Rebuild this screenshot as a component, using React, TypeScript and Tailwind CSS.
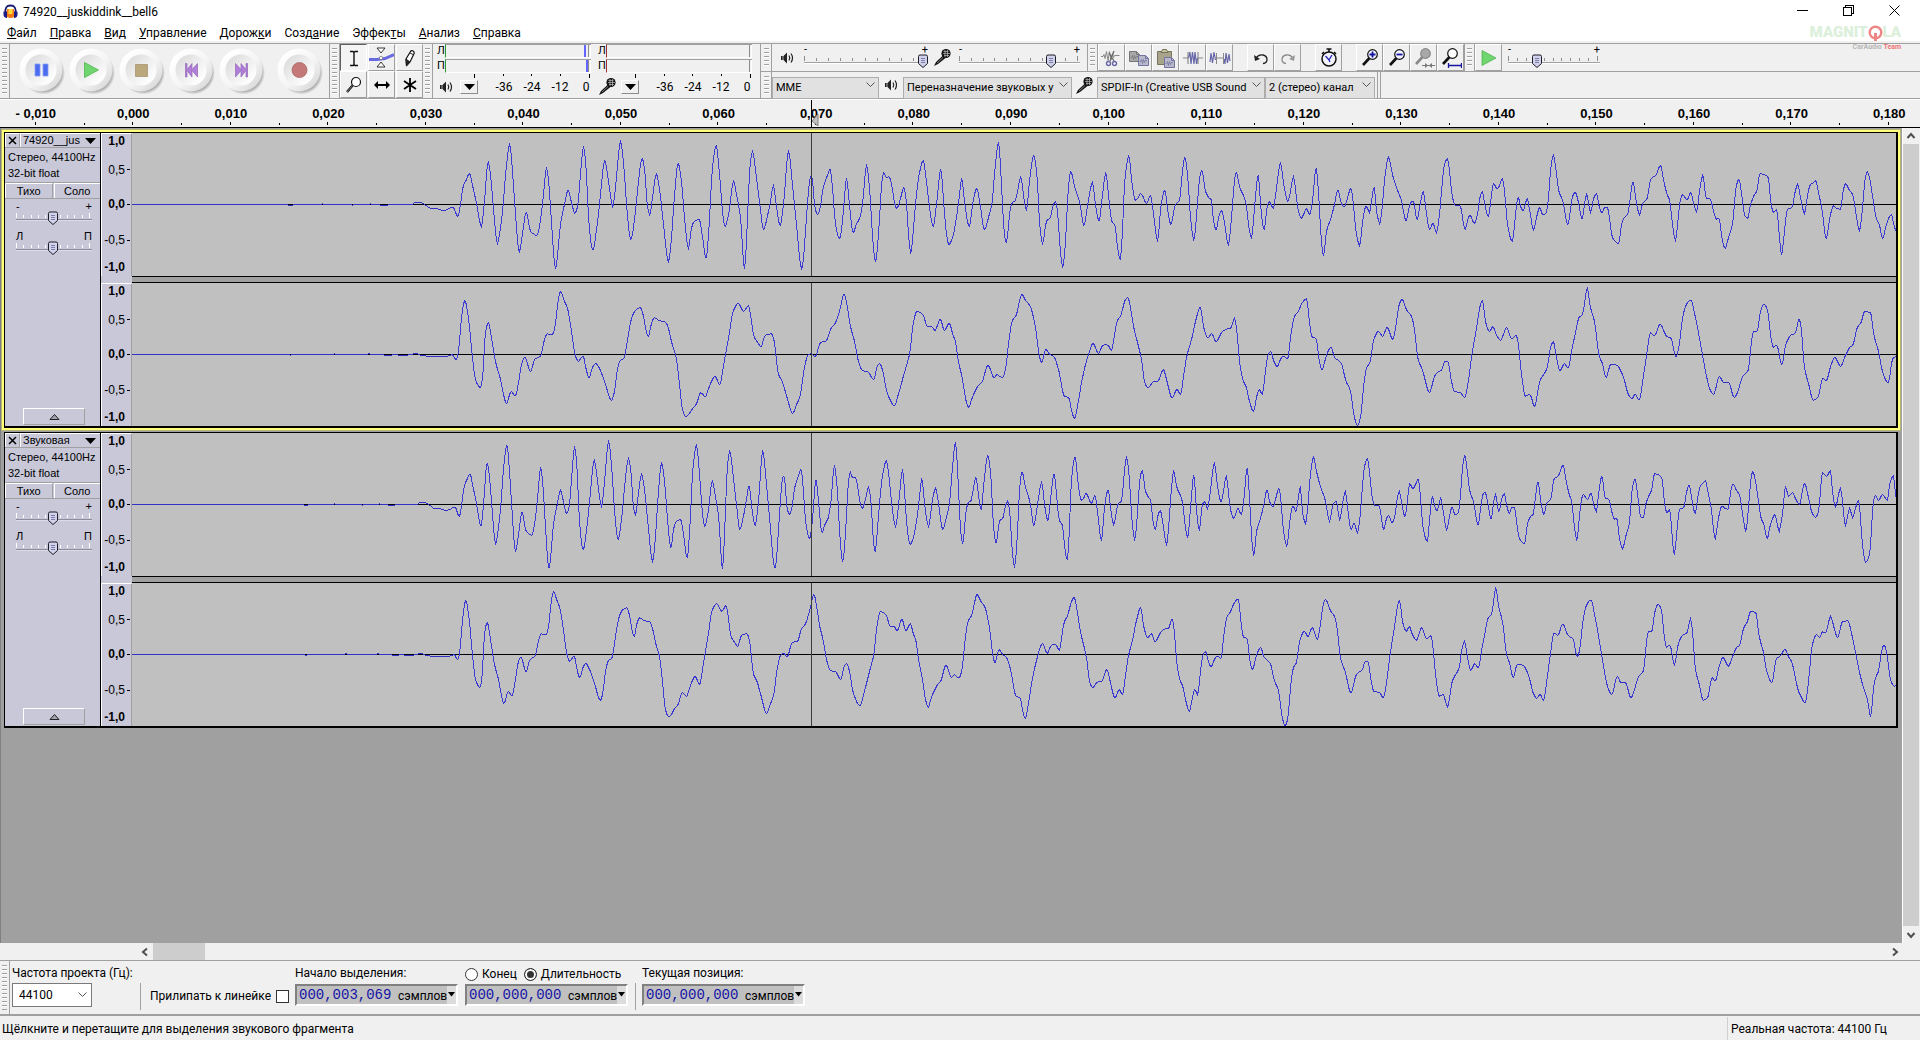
import React from "react";

/* ------------------------------------------------------------------ */
/* Waveform data: time and level pairs, three units to a screen pixel  */
/* ------------------------------------------------------------------ */

const LEFT: number[] = [
  -925, 0, -460, 0, -455, -2, -445, -2, -440, 0, -360, 0, -355, 2, -350, 0, -270, 0, -265, -2, -260, 0, -212, 0, -210, 2, -205, 0, -160, -2, -150, 0,
  -85, 0, -75, 6, -62, 6, -50, 1, -40, -5, -27, -13, -15, -12, 8, -18, 22, -14, 38, -8, 52, -37, 60, 0, 68, 55, 76, 72, 87, 92, 97, 52, 108, 5,
  123, -66, 131, 0, 143, 126, 150, 90, 157, 10, 171, -117, 180, -70, 188, 0, 196, 100, 208, 180, 216, 100, 223, 0, 236, -141, 247, -80, 257, -22,
  270, -80, 280, -88, 289, -93, 298, -60, 308, 20, 318, 111, 326, 50, 332, -40, 345, -192, 360, -60, 372, 0, 383, 43, 392, 10, 403, -27, 412, 0,
  420, 90, 429, 175, 438, 90, 444, -40, 457, -137, 470, -60, 478, 10, 493, 132, 504, 70, 517, -7, 525, 50, 540, 188, 552, 90, 558, 0, 571, -105,
  584, -30, 592, 50, 605, 139, 614, 90, 620, 0, 628, -30, 636, 20, 648, 91, 658, 40, 668, -50, 684, -171, 693, -100, 700, 0, 713, 124, 724, 60,
  732, -40, 744, -132, 752, -75, 760, -52, 767, -48, 776, -45, 785, -90, 797, -162, 806, -60, 815, 100, 827, 177, 838, 80, 846, -20, 854, -66,
  866, -20, 879, 70, 890, 20, 900, -40, 912, -192, 922, -20, 928, 110, 936, 159, 948, 80, 958, 0, 969, -75, 982, -30, 990, 10, 999, 57, 1007, 0,
  1019, -63, 1030, 10, 1044, 160, 1056, 60, 1066, -40, 1084, -192, 1098, -40, 1104, 40, 1110, 85, 1115, 80, 1122, 0, 1131, -30, 1140, -5, 1148, 50,
  1160, 85, 1169, 107, 1176, 50, 1184, -50, 1197, -103, 1205, -60, 1211, 10, 1218, 78, 1226, 10, 1238, -86, 1247, -60, 1258, -40, 1267, 10,
  1278, 117, 1288, 40, 1295, -80, 1305, -171, 1318, -30, 1323, 60, 1330, 96, 1338, 80, 1346, 83, 1355, 50, 1362, 5, 1369, -12, 1378, 10, 1390, 51,
  1398, 5, 1404, -90, 1411, -145, 1420, -60, 1427, 20, 1436, 90, 1448, 132, 1458, 70, 1466, 0, 1478, -66, 1488, 0, 1501, 105, 1510, 0, 1517, -80,
  1525, -120, 1537, -97, 1548, -40, 1556, 20, 1564, 78, 1573, 0, 1586, -66, 1598, 10, 1609, 49, 1619, 0, 1632, -75, 1645, -35, 1654, 0, 1663, 100,
  1674, 187, 1683, 60, 1690, -70, 1697, -117, 1710, -10, 1716, 6, 1724, 10, 1732, 45, 1741, 82, 1750, 20, 1758, -18, 1766, 60, 1780, 148, 1790, 80,
  1797, -50, 1806, -117, 1818, -50, 1830, -38, 1837, -5, 1845, 8, 1852, -30, 1858, -120, 1867, -188, 1875, -110, 1883, 40, 1891, 99, 1903, 50,
  1918, 5, 1930, -63, 1942, 0, 1956, 66, 1965, 0, 1976, -50, 1985, 20, 1996, 93, 2005, 20, 2013, -47, 2024, -65, 2030, -120, 2039, -167, 2046, -80,
  2052, 60, 2065, 144, 2075, 60, 2085, 13, 2092, 18, 2100, 33, 2108, 22, 2118, 3, 2130, 27, 2138, -20, 2151, -108, 2162, 0, 2173, 44, 2182, -20,
  2191, -60, 2205, 0, 2217, 12, 2225, 90, 2233, 142, 2242, 80, 2250, -40, 2260, -105, 2270, -10, 2276, 70, 2284, 103, 2295, 40, 2304, 22, 2312, 15,
  2318, -40, 2327, -77, 2335, -35, 2343, -18, 2351, -50, 2364, -120, 2373, -40, 2379, 40, 2387, 98, 2398, 50, 2408, 30, 2417, 0, 2424, -60,
  2433, -99, 2443, 0, 2453, 89, 2462, -20, 2471, -77, 2480, -5, 2487, 8, 2498, -12, 2507, 40, 2520, 124, 2530, 60, 2542, 8, 2550, 40, 2559, 85,
  2568, 20, 2575, -25, 2583, -41, 2590, -28, 2597, -12, 2608, -30, 2616, 10, 2627, 111, 2635, 20, 2642, -100, 2649, -153, 2658, -80, 2670, -45,
  2681, -5, 2692, 44, 2702, 5, 2712, -7, 2720, 15, 2731, 50, 2739, 0, 2745, -70, 2757, -123, 2768, -40, 2777, -4, 2787, -23, 2793, 10, 2801, 53,
  2808, -20, 2818, -57, 2826, 0, 2833, 80, 2844, 142, 2856, 90, 2868, 50, 2882, 15, 2897, -50, 2908, 0, 2918, 11, 2930, -45, 2939, 0, 2948, 39,
  2957, -20, 2967, -75, 2977, -56, 2988, -84, 2996, -40, 3003, 40, 3011, 115, 3021, 138, 3028, 90, 3036, 20, 3045, -3, 3058, -2, 3074, -75,
  3083, -40, 3089, -32, 3101, -56, 3111, -30, 3118, 20, 3125, 39, 3133, 0, 3143, -36, 3151, 10, 3158, 63, 3170, 48, 3178, 60, 3186, 78, 3194, 20,
  3201, -60, 3216, -111, 3224, -40, 3233, 23, 3240, -5, 3248, -20, 3260, 18, 3268, -20, 3279, -75, 3290, -30, 3297, -8, 3307, -31, 3317, -25,
  3324, 20, 3331, 110, 3339, 148, 3347, 100, 3355, 40, 3367, 10, 3382, -62, 3392, 0, 3398, 30, 3405, 36, 3414, 5, 3425, -45, 3432, 0, 3439, 30,
  3450, -23, 3460, 20, 3468, 33, 3475, 0, 3484, -26, 3492, -10, 3501, -10, 3508, -50, 3516, -100, 3535, -117, 3543, -60, 3552, -38, 3562, -30,
  3568, 10, 3578, 69, 3587, 10, 3597, -30, 3607, 5, 3620, 17, 3630, 75, 3646, 88, 3660, 118, 3670, 70, 3680, 30, 3688, 10, 3696, -60, 3705, -107,
  3715, -20, 3720, 15, 3726, 29, 3740, 15, 3751, 35, 3760, 0, 3769, -20, 3777, 40, 3787, 87, 3797, 20, 3810, 15, 3820, -25, 3828, -44, 3836, -42,
  3844, -100, 3854, -132, 3865, -95, 3877, -55, 3885, 40, 3895, 77, 3905, 20, 3913, -35, 3922, -41, 3930, 0, 3940, 25, 3950, 45, 3958, 92,
  3970, 90, 3983, 80, 3992, 0, 3999, -24, 4009, -15, 4016, -90, 4023, -150, 4032, -80, 4040, -15, 4055, -8, 4064, 40, 4072, 60, 4080, 20,
  4092, -27, 4100, 20, 4109, 58, 4116, 64, 4125, 71, 4135, 30, 4144, -10, 4157, -102, 4168, -40, 4179, -4, 4190, -12, 4200, -14, 4208, 40,
  4215, 62, 4227, 42, 4237, 28, 4247, -30, 4257, -78, 4267, 0, 4273, 70, 4280, 99, 4287, 80, 4297, 20, 4307, -40, 4317, -62, 4327, -104,
  4337, -62, 4353, -30, 4360, -60, 4367, -80, 4371, -60,
];

const RIGHT: number[] = [
  -925, 0, -455, 0, -450, -2, -442, 0, -325, 0, -318, 2, -310, 0, -222, 0, -215, 2, -205, 0, -180, 1, -160, -3, -140, -1, -105, -3, -90, 0, -75, 3, -55, -3,
  -25, -6, 15, -6, 35, -1, 47, -15, 54, 10, 62, 100, 73, 163, 85, 100, 95, 0, 105, -75, 120, -99, 128, -50, 133, 50, 143, 96, 155, 40, 165, -20,
  180, -75, 198, -147, 212, -111, 224, -125, 235, -80, 243, -30, 253, -8, 270, -51, 283, -15, 300, -5, 312, 45, 320, 62, 335, 59, 343, 80,
  353, 160, 360, 189, 370, 165, 382, 135, 393, 70, 405, -5, 413, -20, 428, -5, 437, -45, 446, -70, 456, -40, 465, -27, 478, -45, 495, -90,
  513, -138, 522, -110, 530, -50, 538, -20, 551, -10, 562, 50, 575, 115, 587, 135, 600, 140, 610, 110, 617, 70, 624, 54, 632, 90, 641, 110,
  655, 102, 675, 97, 683, 80, 695, 30, 706, -5, 715, -70, 725, -160, 735, -186, 745, -180, 757, -160, 767, -150, 781, -115, 795, -126, 805, -100,
  823, -66, 838, -90, 848, -40, 855, 0, 866, 60, 878, 130, 893, 153, 910, 130, 924, 147, 933, 100, 940, 55, 952, 36, 962, 24, 974, 57, 993, 62,
  1001, 40, 1014, -60, 1025, -80, 1037, -120, 1057, -177, 1068, -150, 1080, -120, 1090, -50, 1102, -3, 1112, 3, 1124, -6, 1140, 36, 1157, 40,
  1172, 80, 1182, 90, 1197, 130, 1211, 181, 1220, 145, 1230, 85, 1243, 35, 1255, -25, 1265, -48, 1282, -52, 1300, -75, 1310, -35, 1318, -27,
  1327, -50, 1340, -115, 1362, -153, 1375, -115, 1390, -60, 1407, 0, 1418, 90, 1428, 129, 1447, 120, 1460, 85, 1473, 85, 1483, 72, 1499, 105,
  1512, 72, 1526, 93, 1537, 60, 1545, 40, 1553, -15, 1567, -80, 1578, -145, 1585, -158, 1595, -130, 1612, -95, 1626, -80, 1642, -32, 1650, -45,
  1660, -70, 1670, -60, 1685, -70, 1695, -45, 1705, 40, 1715, 100, 1728, 120, 1738, 165, 1744, 180, 1755, 162, 1770, 143, 1785, 80, 1795, 5,
  1803, -25, 1816, 15, 1828, 0, 1840, -7, 1855, -50, 1872, -125, 1885, -130, 1895, -175, 1902, -192, 1912, -150, 1925, -75, 1943, -3, 1958, 33,
  1974, 4, 1985, 25, 1995, 31, 2003, 27, 2013, 12, 2023, 65, 2030, 100, 2040, 115, 2053, 160, 2062, 171, 2070, 140, 2080, 80, 2095, 20,
  2103, -15, 2113, -85, 2123, -99, 2137, -83, 2152, -80, 2169, -45, 2178, -75, 2195, -130, 2209, -105, 2220, -120, 2230, -60, 2240, 0, 2252, 40,
  2265, 100, 2279, 141, 2290, 80, 2302, 50, 2314, 63, 2326, 39, 2345, 67, 2357, 76, 2370, 78, 2382, 108, 2388, 80, 2397, -20, 2407, -75,
  2418, -100, 2428, -145, 2439, -171, 2448, -130, 2456, -105, 2465, -120, 2475, -50, 2483, 0, 2491, 9, 2500, -20, 2510, -37, 2520, -15, 2528, -5,
  2542, -12, 2550, 50, 2562, 115, 2573, 128, 2585, 155, 2598, 167, 2608, 90, 2615, 52, 2627, 48, 2635, -10, 2644, -46, 2656, -8, 2664, 12,
  2672, 21, 2682, -8, 2702, -25, 2715, -75, 2730, -110, 2742, -190, 2751, -214, 2760, -190, 2770, -90, 2778, -40, 2788, -25, 2800, 45, 2814, 70,
  2826, 54, 2840, 81, 2857, 45, 2866, 85, 2876, 150, 2884, 165, 2900, 130, 2913, 115, 2922, 75, 2932, -10, 2947, -50, 2967, -115, 2982, -65,
  2992, -52, 3002, -48, 3014, -20, 3022, -20, 3032, -75, 3042, -112, 3060, -113, 3072, -130, 3082, -90, 3093, -10, 3105, 60, 3125, 162, 3137, 90,
  3147, 70, 3157, 84, 3167, 60, 3180, 43, 3198, 80, 3213, 47, 3227, 57, 3233, 35, 3242, -50, 3255, -125, 3268, -120, 3282, -156, 3298, -80,
  3320, -40, 3330, 20, 3338, 39, 3348, -10, 3358, -48, 3371, -28, 3383, -40, 3395, 20, 3405, 65, 3415, 110, 3427, 122, 3433, 160, 3440, 198,
  3450, 140, 3463, 95, 3475, 0, 3485, -25, 3497, -70, 3510, -30, 3528, -32, 3548, -65, 3562, -115, 3574, -132, 3584, -120, 3596, -137, 3608, -70,
  3620, 10, 3630, 65, 3642, 57, 3659, 91, 3677, 56, 3692, 48, 3706, -8, 3714, 15, 3725, 100, 3735, 145, 3751, 163, 3765, 110, 3785, 5, 3800, -75,
  3808, -105, 3819, -120, 3837, -65, 3850, -85, 3863, -83, 3882, -130, 3892, -110, 3907, -65, 3923, -48, 3933, 40, 3939, 70, 3950, 70,
  3960, 130, 3971, 151, 3982, 130, 3990, 60, 3998, 22, 4009, 28, 4024, -30, 4036, 30, 4050, 57, 4065, 65, 4076, 107, 4082, 80, 4092, -40,
  4105, -90, 4118, -137, 4133, -128, 4147, -70, 4157, -80, 4169, -40, 4183, -9, 4200, -35, 4215, -3, 4227, 20, 4238, 30, 4250, 80, 4262, 97,
  4272, 129, 4290, 125, 4300, 60, 4315, 5, 4327, -55, 4343, -84, 4357, -12, 4370, -5,
];

/* Continuation of the second clip past the end of the first one, in pixels */
const LEFT_TAIL: number[] = [
  1782, -30, 1785, 53, 1788, 25, 1792, 35, 1795, 18, 1799, 0, 1804, 64, 1808, 20, 1811, -20, 1815, -38, 1818, -20, 1822, 95, 1826, 85, 1830, 102,
  1832, 40, 1835, -6, 1840, 48, 1845, -62, 1849, -12, 1852, -38, 1858, 12, 1862, -120, 1865, -173, 1869, -150, 1873, 10, 1875, 28, 1878, 12,
  1882, 30, 1887, 12, 1889, 60, 1893, 86, 1895, 30, 1898, -8,
];
const RIGHT_TAIL: number[] = [
  1784, 16, 1788, -5, 1792, -30, 1798, -110, 1805, -144, 1808, -80, 1812, 30, 1816, 60, 1819, 50, 1822, 68, 1825, 65, 1830, 113, 1834, 75,
  1837, 50, 1842, 98, 1847, 101, 1852, 50, 1857, -25, 1862, -90, 1867, -135, 1870, -185, 1874, -80, 1878, -50, 1882, 20, 1884, 28, 1887, -10,
  1890, -75, 1894, -96, 1898, -80,
];

type Pt = [number, number];
const WAVE_LEFT = 132;
const ZERO = 71;

function toPoints(data: number[], map: (x: number) => number): Pt[] {
  const out: Pt[] = [];
  for (let i = 0; i < data.length; i += 2) out.push([map(data[i]), data[i + 1] / 3]);
  return out;
}

/* Monotone cubic interpolation, sampled once per pixel column */
function sample(pts: Pt[]): number[] {
  const n = pts.length;
  const d: number[] = [];
  for (let i = 0; i < n - 1; i++) d.push((pts[i + 1][1] - pts[i][1]) / (pts[i + 1][0] - pts[i][0]));
  const m: number[] = [d[0]];
  for (let i = 1; i < n - 1; i++) m.push(d[i - 1] * d[i] <= 0 ? 0 : (2 * d[i - 1] * d[i]) / (d[i - 1] + d[i]));
  m.push(d[n - 2]);
  const ys: number[] = [];
  let k = 0;
  const end = Math.floor(pts[n - 1][0]);
  for (let x = 0; x <= end; x++) {
    while (k < n - 2 && pts[k + 1][0] < x) k++;
    const h = pts[k + 1][0] - pts[k][0];
    const t = Math.max(0, Math.min(1, (x - pts[k][0]) / h));
    const t2 = t * t;
    const t3 = t2 * t;
    ys.push(
      (2 * t3 - 3 * t2 + 1) * pts[k][1] + (t3 - 2 * t2 + t) * h * m[k] + (3 * t2 - 2 * t3) * pts[k + 1][1] + (t3 - t2) * h * m[k + 1],
    );
  }
  return ys;
}

const first = (x: number) => 308 + x / 3;
const second = (x: number) => 506.5 + 0.9178 * (440 + x / 3 - 509.3) - WAVE_LEFT;
const fromPx = (x: number) => x - WAVE_LEFT;

const CHANNELS = {
  a1: sample(toPoints(LEFT, first)),
  a2: sample(toPoints(RIGHT, first)),
  b1: sample([...toPoints(LEFT, second), ...toPoints(LEFT_TAIL, fromPx)]),
  b2: sample([...toPoints(RIGHT, second), ...toPoints(RIGHT_TAIL, fromPx)]),
};

function Wave({ ys }: { ys: number[] }) {
  const rows = ys.map((v) => Math.round(ZERO - v));
  const line = rows.map((y, x) => `${x ? "L" : "M"}${x + 0.5} ${y + 0.5}`).join("");
  const dots = rows.map((y, x) => `M${x} ${y}h1v1h-1z`).join("");
  return (
    <svg className="block h-full w-full" shapeRendering="crispEdges" aria-hidden="true">
      <rect x="0" y={ZERO} width="100%" height="1" fill="#000" />
      <path d={line} fill="none" stroke="#4040d6" strokeWidth="1" />
      <path d={dots} fill="#3232c8" />
      <rect x="679" y="0" width="1" height="100%" fill="#3c3c3c" />
    </svg>
  );
}

/* ------------------------------------------------------------------ */
/* Small shared parts                                                  */
/* ------------------------------------------------------------------ */

function Grip() {
  return (
    <div className="flex w-[10px] shrink-0 justify-center self-stretch border-r border-[#a0a0a0] py-1">
      <div className="w-[5px] bg-[repeating-linear-gradient(to_bottom,#a0a0a0_0px,#a0a0a0_1px,#ffffff_1px,#ffffff_2px,#f0f0f0_2px,#f0f0f0_4px)]" />
    </div>
  );
}

function Cell({ label, pressed, children }: { label: string; pressed?: boolean; children: React.ReactNode }) {
  return (
    <button
      aria-label={label}
      className={
        pressed
          ? "flex h-[27px] w-[27px] shrink-0 items-center justify-center border border-t-[#606060] border-l-[#606060] border-r-white border-b-white bg-[#f4f4f4]"
          : "flex h-[27px] w-[27px] shrink-0 items-center justify-center border border-t-white border-l-white border-r-[#a0a0a0] border-b-[#a0a0a0] bg-[#f0f0f0]"
      }
    >
      {children}
    </button>
  );
}

function Speaker() {
  return (
    <svg width="15" height="14" viewBox="0 0 15 14" className="shrink-0" aria-hidden="true">
      <path d="M1 5h2.500L7 1.500v11L3.500 9H1z" fill="#222" />
      <path d="M3 5v4" stroke="#aaa" />
      <path d="M9 4.500q1.500 2.500 0 5M11 2.500q3 4.500 0 9" fill="none" stroke="#222" strokeWidth="1.200" />
    </svg>
  );
}

function Mic() {
  return (
    <svg width="19" height="19" viewBox="0 0 19 19" className="shrink-0" aria-hidden="true">
      <path d="M1 18l2-4 7-6.500 2.500 2.500L5 16z" fill="#111" />
      <circle cx="13" cy="5.500" r="4.600" fill="#111" />
      <path d="M10.500 3.500h5M10 5.500h7M11 7.500h5M12 2v7M14.500 2v7" stroke="#bbb" strokeWidth="0.700" />
      <path d="M4 15l6-5.500" stroke="#999" strokeWidth="0.800" />
    </svg>
  );
}

function Slider({ label, width, thumb, low, high, tint }: { label: string; width: number; thumb: number; low: string; high: string; tint?: boolean }) {
  const ticks = Array.from({ length: 11 }, (_, i) => Math.round((i * (width - 3)) / 10));
  return (
    <div className="relative h-[27px] shrink-0" style={{ width }}>
      <svg className="block" width={width} height="27" aria-hidden="true">
        <g shapeRendering="crispEdges">
          {ticks.map((x, i) => (
            <rect key={i} x={x} y={i % 10 ? 14 : 12} width="1" height={i % 10 ? 3 : 5} fill={tint ? "#ffffff" : "#8c8c8c"} />
          ))}
          <rect x="0" y="18" width={width} height="1" fill={tint ? "#8c8c9c" : "#a0a0a0"} />
          <rect x="0" y="19" width={width} height="1" fill={tint ? "#dcdce8" : "#ffffff"} />
        </g>
        <path d={`M${thumb - 4.5} 12.500q0-1.500 1.500-1.500h6q1.500 0 1.500 1.500v7l-4.500 4-4.500-4z`} fill="#d2d2ea" stroke="#1c1c28" />
        <path d={`M${thumb - 2} 14.500h4M${thumb - 2} 16.500h4M${thumb - 2} 18.500h4`} stroke="#7c7ca8" />
      </svg>
      <span className="absolute top-0 left-0 text-[11px] leading-[11px]">{low}</span>
      <span className="absolute top-0 right-0 text-[11px] leading-[11px]">{high}</span>
      <input type="range" aria-label={label} min={0} max={width} defaultValue={thumb} className="absolute inset-0 m-0 w-full opacity-0" />
    </div>
  );
}

function Combo({ label, value, width }: { label: string; value: string; width: string }) {
  return (
    <div className={`relative h-[22px] shrink-0 ${width}`}>
      <select aria-label={label} className="h-full w-full appearance-none overflow-hidden border border-[#adadad] bg-[#e1e1e1] pr-4 pl-[3px] text-[11px] text-black">
        <option>{value}</option>
      </select>
      <svg className="pointer-events-none absolute top-2 right-1" width="9" height="6" aria-hidden="true">
        <path d="M0.500 0.500l4 4 4-4" fill="none" stroke="#555" />
      </svg>
    </div>
  );
}

/* ------------------------------------------------------------------ */
/* Toolbars                                                            */
/* ------------------------------------------------------------------ */

function RoundButton({ label, children }: { label: string; children: React.ReactNode }) {
  return (
    <button aria-label={label} className="flex h-full w-[50px] shrink-0 items-center justify-center">
      <svg width="50" height="50" viewBox="0 0 50 50">
        <circle cx="26.500" cy="27" r="21.500" fill="url(#drop)" />
        <circle cx="24" cy="24" r="21.500" fill="url(#rim)" />
        <circle cx="24" cy="24" r="15.500" fill="url(#dish)" />
        {children}
      </svg>
    </button>
  );
}

function Transport() {
  return (
    <div className="flex h-full shrink-0 border-r border-[#a0a0a0] pr-1 pl-[7px]">
      <svg width="0" height="0" className="absolute" aria-hidden="true">
        <defs>
          <radialGradient id="drop">
            <stop offset="0.800" stopColor="#9a9a9a" />
            <stop offset="1" stopColor="#f0f0f0" />
          </radialGradient>
          <linearGradient id="rim" x1="0.150" y1="0.150" x2="0.850" y2="0.850">
            <stop offset="0" stopColor="#ffffff" />
            <stop offset="0.600" stopColor="#f4f4f4" />
            <stop offset="1" stopColor="#dcdcdc" />
          </linearGradient>
          <linearGradient id="dish" x1="0.150" y1="0.150" x2="0.850" y2="0.850">
            <stop offset="0" stopColor="#dedede" />
            <stop offset="0.500" stopColor="#efefef" />
            <stop offset="1" stopColor="#ffffff" />
          </linearGradient>
        </defs>
      </svg>
      <RoundButton label="Пауза">
        <path d="M18 18h5v12h-5zM26 18h5v12h-5z" fill="#4a6cf0" stroke="#8ca0f4" strokeWidth="0.800" />
      </RoundButton>
      <RoundButton label="Воспроизвести">
        <path d="M17.500 16.500l14 7.500-14 7.500z" fill="#6fd66f" stroke="#52b452" strokeWidth="0.800" />
      </RoundButton>
      <RoundButton label="Стоп">
        <path d="M18.500 18.500h12v12h-12z" fill="#bba77c" stroke="#a8966e" strokeWidth="0.800" />
      </RoundButton>
      <RoundButton label="К началу">
        <path d="M18.500 17.500h1.500v6l5-6v6l5.500-6v13.500l-5.500-6.500v6.500l-5-6.500v6.500h-1.500z" fill="#b07ed8" stroke="#9468b8" strokeWidth="0.700" />
      </RoundButton>
      <RoundButton label="К концу">
        <path d="M30.500 17.500h-1.500v6l-5-6v6l-5.500-6v13.500l5.500-6.500v6.500l5-6.500v6.500h1.500z" fill="#b07ed8" stroke="#9468b8" strokeWidth="0.700" />
      </RoundButton>
      <div className="w-2" />
      <RoundButton label="Запись">
        <circle cx="24.500" cy="24" r="7.500" fill="#c47878" stroke="#a86464" strokeWidth="0.800" />
      </RoundButton>
    </div>
  );
}

function Tools() {
  return (
    <div className="grid h-full shrink-0 grid-cols-3 gap-x-px">
      <Cell label="Выделение" pressed>
        <svg width="20" height="20" viewBox="0 0 20 20">
          <path d="M6 3.500h3l1 1 1-1h3M6 17.500h3l1-1 1 1h3M10 4v13" fill="none" stroke="#111" strokeWidth="1.400" />
        </svg>
      </Cell>
      <Cell label="Огибающая">
        <svg width="25" height="23" viewBox="0 0 25 23">
          <path d="M0 13.500h8l8-1 9-4" fill="none" stroke="#6a6ae0" strokeWidth="3" />
          <path d="M8 2h8l-4 5zM8 21h8l-4-5z" fill="#fff" stroke="#222" strokeWidth="0.900" />
          <circle cx="12" cy="12" r="1.700" fill="#fff" stroke="#555" strokeWidth="0.600" />
        </svg>
      </Cell>
      <Cell label="Изменение сэмплов">
        <svg width="14" height="18" viewBox="0 0 14 18">
          <path d="M3 10l4.500-7.500q1-1.500 2.500-0.500t1.200 2.300L7 13l-3.500 3.500z" fill="#fff" stroke="#111" strokeWidth="1.200" />
          <path d="M3 10l4 3-3.500 4zM7 4l4 2" fill="#222" stroke="#222" />
        </svg>
      </Cell>
      <Cell label="Масштабирование">
        <svg width="18" height="18" viewBox="0 0 18 18">
          <path d="M2 16l6-7" stroke="#111" strokeWidth="2.400" />
          <path d="M2 16l6-7" stroke="#aaa" strokeWidth="0.700" />
          <circle cx="11" cy="6" r="4.500" fill="#fff" stroke="#111" strokeWidth="1.200" />
        </svg>
      </Cell>
      <Cell label="Сдвиг">
        <svg width="18" height="10" viewBox="0 0 18 10">
          <path d="M3 5h12" stroke="#000" strokeWidth="2" />
          <path d="M1 5l4-4v8zM17 5l-4-4v8z" />
        </svg>
      </Cell>
      <Cell label="Мультиинструмент">
        <svg width="16" height="16" viewBox="0 0 16 16">
          <path d="M8 1v14M2 4l12 8M14 4L2 12" stroke="#000" strokeWidth="1.800" />
        </svg>
      </Cell>
    </div>
  );
}

function Meter({ kind }: { kind: "play" | "rec" }) {
  const play = kind === "play";
  return (
    <div className="flex w-[161px] shrink-0 flex-col">
      {["Л", "П"].map((ch, i) => (
        <div key={ch} className="flex h-[15px]">
          <span className="w-[12px] pl-1 text-[11px] leading-[14px]">{ch}</span>
          <div
            className={
              play
                ? "mb-px flex w-[146px] justify-end border-t border-b border-l border-t-[#a0a0a0] border-b-white border-l-[#2c9c2c]"
                : "mb-px flex w-[146px] justify-end border-t border-b border-l border-t-[#a0a0a0] border-b-white border-l-[#a03030]"
            }
          >
            {play && <div className={i ? "w-[2px] bg-[#6464ff]" : "mr-[2px] w-[2px] bg-[#6464ff]"} />}
            <div className="w-[3px] border-r border-l border-r-white border-l-[#8c8c8c]" />
          </div>
        </div>
      ))}
      <svg className="block" width="161" height="4" shapeRendering="crispEdges" aria-hidden="true">
        {[41, 70, 98, 127, 156].map((x) => (
          <rect key={x} x={x} y="0" width="1" height={x === 41 || x === 156 ? 4 : 2} />
        ))}
      </svg>
      <div className="flex h-[17px] items-center">
        <div className="flex w-[27px] shrink-0 justify-center">{play ? <Speaker /> : <Mic />}</div>
        <button
          aria-label={play ? "Меню индикатора воспроизведения" : "Меню индикатора записи"}
          className="flex h-[14px] w-[18px] shrink-0 items-center justify-center border border-t-white border-l-white border-r-[#8c8c8c] border-b-[#8c8c8c]"
        >
          <svg width="11" height="6">
            <path d="M0 0h11l-5.500 6z" />
          </svg>
        </button>
        <div className="ml-3 flex text-center text-[12px] leading-[14px]">
          <span className="w-7">-36</span>
          <span className="w-7">-24</span>
          <span className="w-7">-12</span>
          <span className="w-6">0</span>
        </div>
      </div>
    </div>
  );
}

const GREY_WAVE = "M0 8.500h2l1-2 1 4 1.500-7 1.500 9 1.500-9 1.500 8 1.500-6 1 4 1-2h5";

function ClipIcon({ x, y, fill, stroke }: { x: number; y: number; fill: string; stroke: string }) {
  return (
    <g transform={`translate(${x} ${y})`}>
      <path d="M0.500 0.500h7l3 3v7h-10z" fill={fill} stroke={stroke} />
      <path d="M7.500 0.500v3h3" fill="none" stroke={stroke} />
      <path d="M1.500 6.500h1l1-2 1 4 1-4 1 3 1-2h1.500" fill="none" stroke={stroke} strokeWidth="0.800" />
    </g>
  );
}

function Lens({ fill, stroke, sign }: { fill: string; stroke: string; sign?: string }) {
  return (
    <>
      <path d="M3 17l7-7.500" stroke={stroke} strokeWidth="2.600" />
      <circle cx="12.500" cy="6.500" r="4.800" fill={fill} stroke={stroke} strokeWidth="1.200" />
      {sign && <path d={sign} stroke="#1414a0" strokeWidth="1.800" />}
    </>
  );
}

function EditTools() {
  return (
    <div className="flex h-full shrink-0">
      <Cell label="Вырезать">
        <svg width="22" height="20" viewBox="0 0 22 20">
          <path d={GREY_WAVE} fill="none" stroke="#888" />
          <path d="M13 3l-4 10M8 5l5 8" stroke="#666" strokeWidth="1.300" />
          <circle cx="7.500" cy="15.500" r="2" fill="none" stroke="#6868a8" strokeWidth="1.400" />
          <circle cx="13.500" cy="15.500" r="2" fill="none" stroke="#6868a8" strokeWidth="1.400" />
        </svg>
      </Cell>
      <Cell label="Копировать">
        <svg width="22" height="20" viewBox="0 0 22 20">
          <ClipIcon x={1} y={3} fill="#a8a8a8" stroke="#777" />
          <ClipIcon x={10} y={7} fill="#b8b8c8" stroke="#7474a4" />
        </svg>
      </Cell>
      <Cell label="Вставить">
        <svg width="22" height="22" viewBox="0 0 22 22">
          <path d="M2.500 4.500h14v13h-14z" fill="#a8a48c" stroke="#77745c" />
          <path d="M6 5.500l1.500-3h4l1.500 3z" fill="#c8c49c" stroke="#77745c" />
          <ClipIcon x={9} y={10} fill="#b8b8c8" stroke="#7474a4" />
        </svg>
      </Cell>
      <Cell label="Обрезать края">
        <svg width="22" height="20" viewBox="0 0 22 20">
          <path d="M1 10h5M16 10h5" stroke="#888" />
          <path d="M6 4v12M16 4v12" stroke="#777" />
          <path d="M6.500 10l1.500-6 1 12 1.500-12 1.500 12 1-12 1.500 12 1-6" fill="none" stroke="#6868a8" strokeWidth="1.200" />
        </svg>
      </Cell>
      <Cell label="Заглушить">
        <svg width="22" height="20" viewBox="0 0 22 20">
          <path d="M1 14l1-9 1.500 10 1.500-11 1.500 8M15 11l1 5 1-11 1.500 10 1.500-9 1 7" fill="none" stroke="#6868a8" strokeWidth="1.200" />
          <path d="M7 10h8M7.500 5v11M14.500 5v11" stroke="#888" />
        </svg>
      </Cell>
      <div className="w-[14px]" />
      <Cell label="Отменить">
        <svg width="16" height="14" viewBox="0 0 16 14">
          <path d="M3 7q3-4 7-3t4 4.500-4 4" fill="none" stroke="#222" strokeWidth="1.300" />
          <path d="M1 4l1 6 5-2z" fill="#222" />
        </svg>
      </Cell>
      <Cell label="Повторить">
        <svg width="16" height="14" viewBox="0 0 16 14">
          <path d="M13 7q-3-4-7-3t-4 4.500 4 4" fill="none" stroke="#888" strokeWidth="1.300" />
          <path d="M15 4l-1 6-5-2z" fill="#999" />
        </svg>
      </Cell>
      <div className="w-[14px]" />
      <Cell label="Синхронизация дорожек">
        <svg width="18" height="20" viewBox="0 0 18 20">
          <path d="M6.500 1h5M9 1v4M14 4l2 2M4 4L2 6" stroke="#111" strokeWidth="1.600" />
          <circle cx="9" cy="11" r="7" fill="#f4f4ff" stroke="#111" strokeWidth="1.500" />
          <path d="M5.500 8l3.500 4 3-5M9 12l1 2" fill="none" stroke="#2020b4" strokeWidth="1.300" />
        </svg>
      </Cell>
      <div className="w-[14px]" />
      <Cell label="Приблизить">
        <svg width="20" height="20" viewBox="0 0 20 20">
          <Lens fill="#f4f4ff" stroke="#111" sign="M9.500 6.500h6M12.500 3.500v6" />
        </svg>
      </Cell>
      <Cell label="Отдалить">
        <svg width="20" height="20" viewBox="0 0 20 20">
          <Lens fill="#f4f4ff" stroke="#111" sign="M9.500 6.500h6" />
        </svg>
      </Cell>
      <Cell label="Уместить выделенное">
        <svg width="22" height="22" viewBox="0 0 22 22">
          <Lens fill="#a8a8a8" stroke="#888" />
          <path d="M9 18.500h13" stroke="#777" />
          <path d="M15 18.500l-3-2.500v5zM16 18.500l3-2.500v5z" fill="#777" />
        </svg>
      </Cell>
      <Cell label="Уместить проект">
        <svg width="22" height="22" viewBox="0 0 22 22">
          <Lens fill="#fff" stroke="#111" />
          <path d="M9 18.500h12M8.500 16v5M21.500 16v5" stroke="#1414a0" strokeWidth="1.300" />
        </svg>
      </Cell>
    </div>
  );
}

function Toolbars() {
  return (
    <div className="flex h-[56px] shrink-0 border-t border-b border-[#a0a0a0] bg-[#f0f0f0]">
      <Grip />
      <Transport />
      <Grip />
      <Tools />
      <Grip />
      <div className="flex w-[328px] shrink-0 border-r border-[#a0a0a0]">
        <Meter kind="play" />
        <Meter kind="rec" />
      </div>
      <div className="flex min-w-0 flex-1 flex-col">
        <div className="flex h-7 shrink-0 border-b border-[#a0a0a0]">
          <div className="w-px" />
          <Grip />
          <div className="flex w-[316px] shrink-0 items-center border-r border-[#a0a0a0] pl-2">
            <Speaker />
            <div className="w-[9px]" />
            <Slider label="Громкость воспроизведения" width={124} thumb={119} low="-" high="+" />
            <div className="w-[5px]" />
            <Mic />
            <div className="w-[7px]" />
            <Slider label="Громкость записи" width={121} thumb={92} low="-" high="+" />
          </div>
          <Grip />
          <EditTools />
          <div className="flex border-l border-[#a0a0a0]">
            <Grip />
          </div>
          <Cell label="Воспроизвести с выбранной скоростью">
            <svg width="16" height="16" viewBox="0 0 16 16">
              <path d="M1 0.500l14 7.500-14 7.500z" fill="#6fd66f" stroke="#52b452" strokeWidth="0.800" />
            </svg>
          </Cell>
          <div className="w-[6px]" />
          <Slider label="Скорость воспроизведения" width={92} thumb={29} low="-" high="+" />
        </div>
        <div className="flex h-[26px] shrink-0 items-center">
          <div className="w-px" />
          <Grip />
          <div className="flex h-full items-center border-r border-[#a0a0a0] pr-[2px]">
            <Combo label="Аудиохост" value="MME" width="w-[107px]" />
            <div className="flex w-[24px] justify-center">
              <Speaker />
            </div>
            <Combo label="Устройство воспроизведения" value="Переназначение звуковых у" width="w-[169px]" />
            <div className="flex w-[25px] justify-center">
              <Mic />
            </div>
            <Combo label="Устройство записи" value="SPDIF-In (Creative USB Sound" width="w-[168px]" />
            <Combo label="Каналы записи" value="2 (стерео) канал" width="w-[110px]" />
          </div>
          <div className="h-full w-[3px] border-r border-[#a0a0a0]" />
        </div>
      </div>
    </div>
  );
}

/* ------------------------------------------------------------------ */
/* Header, menu and ruler                                              */
/* ------------------------------------------------------------------ */

const MENUS: [string, string, string][] = [
  ["", "Ф", "айл"],
  ["", "П", "равка"],
  ["", "В", "ид"],
  ["", "У", "правление"],
  ["Дорож", "к", "и"],
  ["Созд", "а", "ние"],
  ["Эффек", "т", "ы"],
  ["", "А", "нализ"],
  ["", "С", "правка"],
];

function Header() {
  return (
    <header className="relative shrink-0 border-b-2 border-[#f0f0f0] bg-white">
      <div className="flex h-[23px] items-center">
        <svg width="15" height="15" viewBox="0 0 15 15" className="ml-[3px]" aria-hidden="true">
          <path d="M4 5h7v8q-3.500 2-7 0z" fill="#f47a14" />
          <path d="M5.500 5h4v5h-4z" fill="#ffd83c" />
          <path d="M2.500 9Q1.500 1.500 7.500 1.500t5 7.500" fill="none" stroke="#14146c" strokeWidth="1.800" />
          <path d="M0.500 7.500h3.500v6.500q-3 0-3.500-3zM14.500 7.500h-3.500v6.500q3 0 3.500-3z" fill="#1c1c84" />
        </svg>
        <h1 className="ml-[5px] text-[12px]">74920__juskiddink__bell6</h1>
        <div className="ml-auto flex h-full items-center pr-[20px] pb-[3px]">
          <button aria-label="Свернуть" className="mr-[35px]">
            <svg width="11" height="11" shapeRendering="crispEdges">
              <path d="M0 5.500h11" stroke="#000" />
            </svg>
          </button>
          <button aria-label="Восстановить" className="mr-[35px]">
            <svg width="11" height="11" shapeRendering="crispEdges">
              <path d="M0.500 2.500h8v8h-8zM2.500 2.500v-2h8v8h-2" fill="none" stroke="#000" />
            </svg>
          </button>
          <button aria-label="Закрыть">
            <svg width="11" height="11">
              <path d="M0.500 0.500l10 10M10.500 0.500l-10 10" stroke="#000" />
            </svg>
          </button>
        </div>
      </div>
      <nav className="flex h-[18px] gap-[13px] pl-[7px] text-[12px] leading-5">
        {MENUS.map(([a, b, c]) => (
          <button key={a + b + c}>
            {a}
            <span className="underline">{b}</span>
            {c}
          </button>
        ))}
      </nav>
      <div className="absolute top-[20px] right-[19px] z-10 flex flex-col items-end opacity-90">
        <div className="flex h-6 items-center text-[15px] font-black text-[#d8eed8]">
          MAGNIT
          <svg width="15" height="19" viewBox="0 0 15 19" aria-hidden="true">
            <circle cx="7.500" cy="9.500" r="5.800" fill="none" stroke="#ee7a7a" strokeWidth="2.400" />
            <path d="M7.500 10v8" stroke="#ee7a7a" strokeWidth="3" />
          </svg>
          LA
        </div>
        <div className="text-[7px] leading-[6px] font-bold text-[#b0b0b0]">
          CarAudio <span className="text-[#ee6a6a]">Team</span>
        </div>
      </div>
    </header>
  );
}

const RULER = Array.from({ length: 20 }, (_, i) => (i === 0 ? "- 0,010" : "0," + String((i - 1) * 10).padStart(3, "0")));

function Ruler() {
  return (
    <div className="relative flex h-[29px] shrink-0 overflow-hidden border-t border-b border-t-white border-b-black bg-[#f0f0f0]">
      <div className="-mr-[18px] -ml-[13px] flex flex-1">
        {RULER.map((label) => (
          <div key={label} className="flex flex-1 flex-col items-center">
            <span className="mt-[6px] mb-px h-[15px] font-['Liberation_Sans',Arial,sans-serif] text-[13px] leading-[15px] font-bold whitespace-nowrap">{label}</span>
            <div className="flex w-full justify-end">
              <div className="mr-[48px] h-[3px] w-px bg-black" />
              <div className="h-[2px] w-px self-end bg-black" />
            </div>
          </div>
        ))}
      </div>
      <div className="absolute top-0 bottom-0 left-[811px] flex">
        <div className="w-px bg-black" />
        <svg className="mt-[13px]" width="8" height="14" aria-hidden="true">
          <path d="M0 8l6-7v12z" fill="#c0c0c0" stroke="#808080" />
        </svg>
      </div>
    </div>
  );
}

/* ------------------------------------------------------------------ */
/* Tracks                                                              */
/* ------------------------------------------------------------------ */

function LevelRuler() {
  return (
    <div className="flex h-[143px] flex-col border-t border-r border-l border-t-white border-r-[#a0a0a0] border-l-white pr-[1px] text-right font-['Liberation_Sans',Arial,sans-serif] text-[12px]">
      <div className="h-[15px] pr-[5px] leading-[14px] font-bold">1,0</div>
      {[
        ["0,5", "h-[41px] font-normal"],
        ["0,0", "h-[28px] font-bold"],
        ["-0,5", "h-[44px] font-normal"],
      ].map(([v, cls]) => (
        <div key={v} className={`flex items-center justify-end gap-[2px] ${cls}`}>
          {v}
          <span className="h-px w-[3px] bg-black" />
        </div>
      ))}
      <div className="h-[14px] pr-[5px] leading-[11px] font-bold">-1,0</div>
    </div>
  );
}

function Track({ name, selected, left, right }: { name: string; selected?: boolean; left: number[]; right: number[] }) {
  return (
    <section className={selected ? "mr-px border-2 border-[#ffff78] shadow-[0_0_0_1px_#b4b478]" : "mr-px border-2 border-transparent"}>
      <div className="flex h-[296px] border-t border-r-2 border-b-2 border-l border-black bg-[#a0a0a0]">
        <div className="flex w-[95px] shrink-0 flex-col bg-[#c8c8d8] font-['Liberation_Sans',Arial,sans-serif] text-[11px]">
          <div className="flex h-[15px] shrink-0 border-b border-[#a0a0a0]">
            <button aria-label="Закрыть дорожку" className="flex w-[15px] items-center justify-center border-t border-r border-l border-white border-r-[#a0a0a0]">
              <svg width="9" height="9">
                <path d="M1 1l7 7M8 1l-7 7" stroke="#000" strokeWidth="1.500" />
              </svg>
            </button>
            <button className="flex flex-1 items-center justify-between border-t border-l border-white pr-1 pl-[2px]">
              <span className="leading-[13px]">{name}</span>
              <svg width="11" height="6">
                <path d="M0 0h11l-5.500 6z" />
              </svg>
            </button>
          </div>
          <div className="h-[34px] pt-px pl-[3px] leading-4 whitespace-nowrap">
            Стерео, 44100Hz
            <br />
            32-bit float
          </div>
          <div className="flex h-[17px] shrink-0 gap-px border-t border-b border-[#a0a0a0]">
            <button className="flex-1 border-t border-r border-l border-white border-r-[#a0a0a0] leading-[13px]">Тихо</button>
            <button className="flex-1 border-t border-l border-white leading-[13px]">Соло</button>
          </div>
          <div className="flex flex-col gap-[3px] pt-[2px] pl-[11px]">
            <Slider label="Усиление" width={76} thumb={37} low="-" high="+" tint />
            <Slider label="Панорама" width={76} thumb={37} low="Л" high="П" tint />
          </div>
          <button
            aria-label="Свернуть дорожку"
            className="mt-auto mb-px ml-[18px] flex h-[17px] w-[62px] items-center justify-center border border-t-white border-l-white border-r-[#a0a0a0] border-b-[#a0a0a0]"
          >
            <svg width="11" height="6">
              <path d="M1 5.500l4.500-5 4.500 5z" fill="#a0a0b0" stroke="#222" />
            </svg>
          </button>
        </div>
        <div className="flex w-8 shrink-0 flex-col gap-[7px] border-l border-black bg-[#c8c8d8]">
          <LevelRuler />
          <LevelRuler />
        </div>
        <div className="flex min-w-0 flex-1 flex-col bg-[#c0c0c0]">
          <div className="h-[143px] overflow-hidden">
            <Wave ys={left} />
          </div>
          <div className="h-[7px] border-t border-b border-black bg-[#a0a0a0]" />
          <div className="h-[143px] overflow-hidden">
            <Wave ys={right} />
          </div>
        </div>
      </div>
    </section>
  );
}

/* ------------------------------------------------------------------ */
/* Selection bar                                                       */
/* ------------------------------------------------------------------ */

function TimeField({ label, value }: { label: string; value: string }) {
  return (
    <div className="flex h-[22px] w-[163px] items-center border-2 border-t-[#808080] border-l-[#808080] border-r-white border-b-white bg-[#c0c0c0]">
      <input aria-label={label} defaultValue={value} className="w-[101px] bg-transparent pl-[2px] font-['Liberation_Mono',monospace] text-[14px] text-[#1414a8] outline-none" />
      <span className="flex-1 pt-[2px] text-[12px] whitespace-nowrap">сэмплов</span>
      <button aria-label="Формат времени" className="flex h-full w-[9px] justify-center bg-[#dcdcdc] pt-[6px]">
        <svg width="7" height="5">
          <path d="M0 0h7l-3.500 4.500z" />
        </svg>
      </button>
    </div>
  );
}

function Radio({ label, checked }: { label: string; checked?: boolean }) {
  return (
    <label className="flex items-center gap-[4px]">
      <input
        type="radio"
        name="range-mode"
        defaultChecked={checked}
        className="m-0 h-[13px] w-[13px] appearance-none rounded-full border border-[#333] bg-white checked:bg-[#333] checked:shadow-[inset_0_0_0_2px_#fff]"
      />
      {label}
    </label>
  );
}

function SelectionBar() {
  return (
    <div className="flex h-[56px] shrink-0 border-t border-b-2 border-[#a0a0a0] bg-[#f0f0f0] text-[12px]">
      <div className="flex w-[12px]">
        <Grip />
      </div>
      <div className="flex w-[128px] flex-col">
        <label htmlFor="rate" className="mt-[3px] h-[19px] leading-[19px] whitespace-nowrap">
          Частота проекта (Гц):
        </label>
        <div className="relative h-6 w-[80px]">
          <select id="rate" className="h-full w-full appearance-none border border-[#7a7a7a] bg-white pl-[6px] text-black">
            <option>44100</option>
          </select>
          <svg className="pointer-events-none absolute top-[9px] right-[5px]" width="9" height="6" aria-hidden="true">
            <path d="M0.500 0.500l4 4 4-4" fill="none" stroke="#555" />
          </svg>
        </div>
      </div>
      <div className="mt-[22px] h-[27px] w-[10px] border-l border-[#a0a0a0]" />
      <label className="mt-[25px] flex h-5 w-[145px] items-center justify-between pr-[6px] whitespace-nowrap">
        Прилипать к линейке
        <input type="checkbox" className="m-0 h-[13px] w-[13px] appearance-none border border-[#333] bg-white" />
      </label>
      <div className="flex w-[170px] flex-col">
        <div className="mt-[3px] h-[20px] leading-[19px]">Начало выделения:</div>
        <TimeField label="Начало выделения" value="000,003,069" />
      </div>
      <div className="flex w-[170px] flex-col">
        <div className="mt-[3px] flex h-[20px] gap-[7px]">
          <Radio label="Конец" />
          <Radio label="Длительность" checked />
        </div>
        <TimeField label="Длительность" value="000,000,000" />
      </div>
      <div className="mt-[22px] h-[27px] w-[7px] border-l border-[#a0a0a0]" />
      <div className="flex w-[170px] flex-col">
        <div className="mt-[3px] h-[20px] leading-[19px]">Текущая позиция:</div>
        <TimeField label="Текущая позиция" value="000,000,000" />
      </div>
    </div>
  );
}

function Arrow({ d, label, className }: { d: string; label: string; className: string }) {
  return (
    <button aria-label={label} className={`flex shrink-0 items-center justify-center ${className}`}>
      <svg width="10" height="10">
        <path d={d} fill="none" stroke="#505050" strokeWidth="2" />
      </svg>
    </button>
  );
}

export default function App() {
  return (
    <div className="flex h-screen w-full flex-col overflow-hidden bg-[#f0f0f0] font-['Roboto','Noto_Sans',sans-serif] text-black">
      <Header />
      <Toolbars />
      <Ruler />
      <main className="flex min-h-0 flex-1 border-l border-[#808080] bg-[#a0a0a0]">
        <div className="min-w-0 flex-1 overflow-hidden border-r border-white pt-[2px] pr-px pl-px">
          <Track name="74920__jus" selected left={CHANNELS.a1} right={CHANNELS.a2} />
          <Track name="Звуковая" left={CHANNELS.b1} right={CHANNELS.b2} />
        </div>
        <div className="flex w-[17px] shrink-0 flex-col bg-[#f0f0f0] pr-px">
          <Arrow label="Вверх" d="M1.500 7l3.500-4 3.500 4" className="h-4" />
          <div className="flex-1 bg-[#cdcdcd]" />
          <Arrow label="Вниз" d="M1.500 3l3.500 4 3.500-4" className="h-[17px]" />
        </div>
      </main>
      <div className="flex h-[17px] shrink-0 pr-[17px] pl-[136px]">
        <Arrow label="Влево" d="M7 1.500l-4 3.500 4 3.500" className="w-[17px]" />
        <div className="w-[52px] bg-[#cdcdcd]" />
        <Arrow label="Вправо" d="M3 1.500l4 3.500-4 3.500" className="ml-auto w-[17px]" />
      </div>
      <SelectionBar />
      <footer className="flex h-6 shrink-0 items-center pt-px pl-[2px] text-[12px]">
        <span className="flex-1">Щёлкните и перетащите для выделения звукового фрагмента</span>
        <span className="h-full w-[193px] border-l border-[#d0d0d0] pl-[3px] leading-6">Реальная частота: 44100 Гц</span>
      </footer>
    </div>
  );
}
